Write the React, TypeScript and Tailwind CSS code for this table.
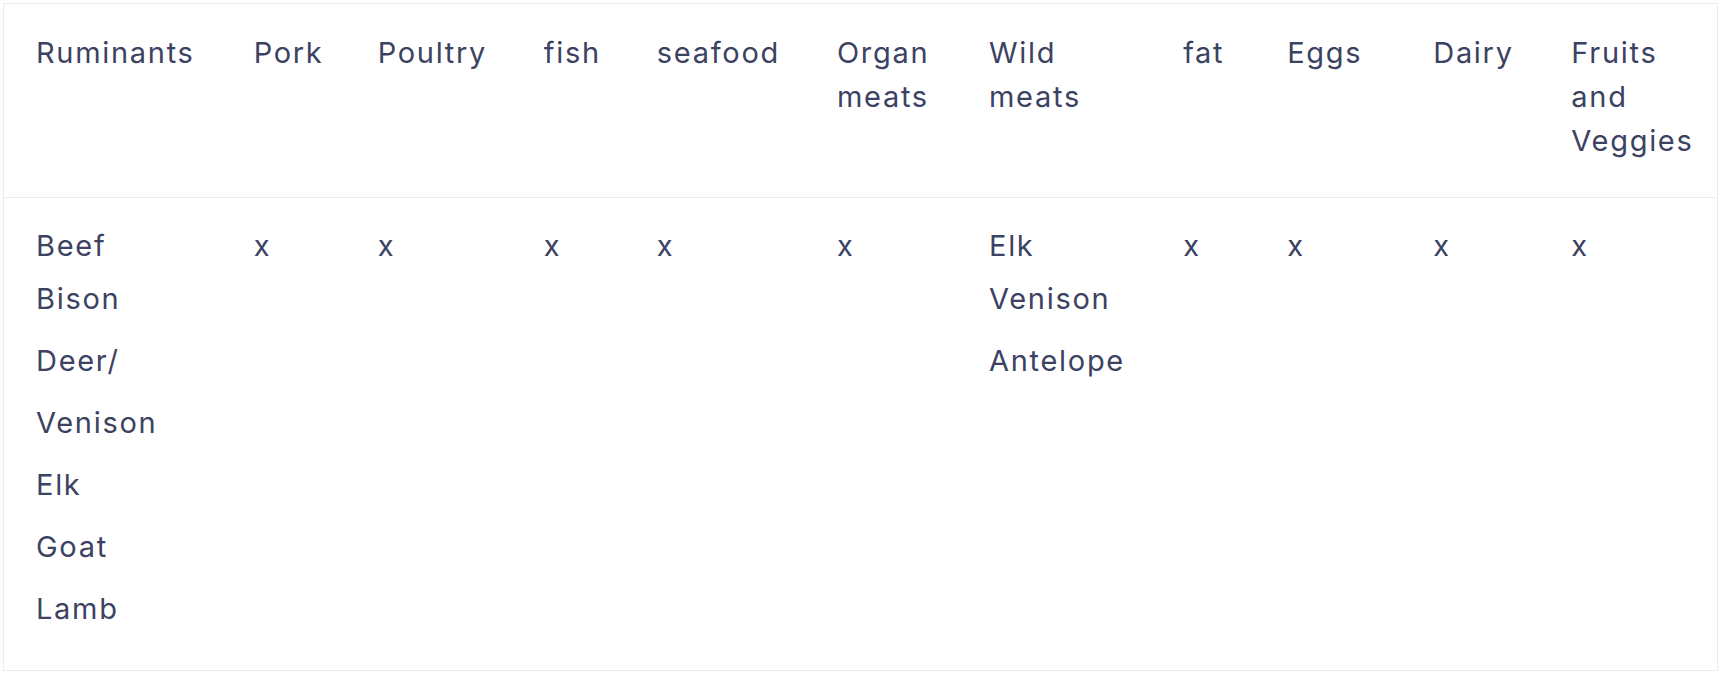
const columns: { head: string[]; body: string[]; width: string }[] = [
  { head: ["Ruminants"], body: ["Beef", "Bison", "Deer/", "Venison", "Elk", "Goat", "Lamb"], width: "w-[218px]" },
  { head: ["Pork"], body: ["x"], width: "w-[124px]" },
  { head: ["Poultry"], body: ["x"], width: "w-[166px]" },
  { head: ["fish"], body: ["x"], width: "w-[113px]" },
  { head: ["seafood"], body: ["x"], width: "w-[180px]" },
  { head: ["Organ", "meats"], body: ["x"], width: "w-[152px]" },
  { head: ["Wild", "meats"], body: ["Elk", "Venison", "Antelope"], width: "w-[194px]" },
  { head: ["fat"], body: ["x"], width: "w-[104px]" },
  { head: ["Eggs"], body: ["x"], width: "w-[146px]" },
  { head: ["Dairy"], body: ["x"], width: "w-[138px]" },
  { head: ["Fruits", "and", "Veggies"], body: ["x"], width: "w-[178px]" },
];

export default function App() {
  return (
    <div className="w-full h-[674px] bg-white pt-[3px] px-[3px] font-['Inter',sans-serif] text-[#3c4262] text-[29px] tracking-[1.7px]">
      <table className="table-fixed border-collapse border border-[#ececec] w-[1715px]">
        <thead>
          <tr className="border-b border-[#ececec]">
            {columns.map((col, i) => (
              <th key={i} className={`${col.width} text-left font-normal align-top pl-[32px] pt-[27px] pb-[34px] whitespace-nowrap`}>
                {col.head.map((line, j) => (
                  <div key={j} className="leading-[44px]">
                    {line}
                  </div>
                ))}
              </th>
            ))}
          </tr>
        </thead>
        <tbody>
          <tr>
            {columns.map((col, i) => (
              <td key={i} className="align-top pl-[32px] pt-[26px] pb-[30px] whitespace-nowrap">
                {col.body.map((line, j) => (
                  <div key={j} className={j === 0 ? "leading-[44px]" : "leading-[62px]"}>
                    {line}
                  </div>
                ))}
              </td>
            ))}
          </tr>
        </tbody>
      </table>
    </div>
  );
}
